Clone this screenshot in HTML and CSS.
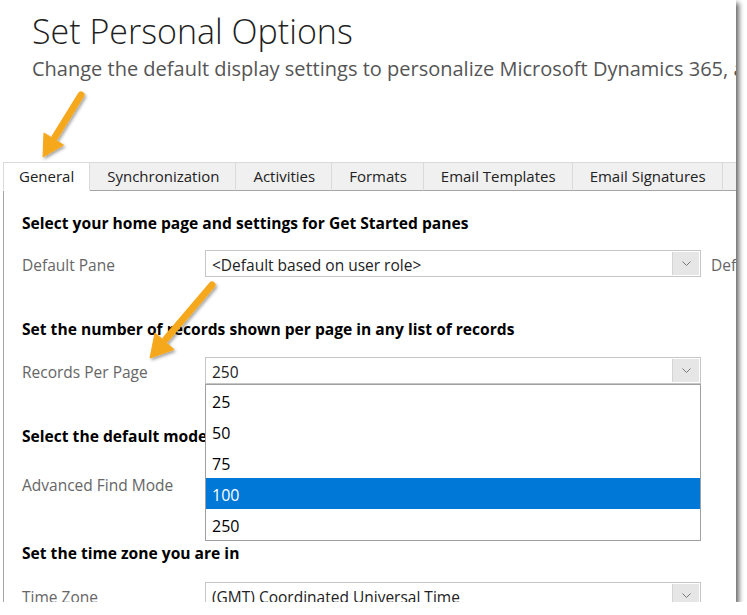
FILE: index.html
```html
<!DOCTYPE html>
<html lang="en">
<head>
<meta charset="utf-8">
<title>Set Personal Options</title>
<link rel="stylesheet" href="styles.css">
</head>
<body>
<div class="frame">
  <header class="header">
    <h1 class="title">Set Personal Options</h1>
    <p class="subtitle">Change the default display settings to personalize Microsoft Dynamics 365, and choose options for each area</p>
  </header>

  <nav class="tabs">
    <div class="tab tab-active">General</div>
    <div class="tab">Synchronization</div>
    <div class="tab">Activities</div>
    <div class="tab">Formats</div>
    <div class="tab">Email Templates</div>
    <div class="tab">Email Signatures</div>
    <div class="tab">Privacy</div>
  </nav>

  <main class="panel">
    <section class="section s1">
      <h2 class="heading">Select your home page and settings for Get Started panes</h2>
      <div class="row">
        <span class="label">Default Pane</span>
        <div class="select"><span class="value">&lt;Default based on user role&gt;</span><span class="btn"><svg width="9" height="5" viewBox="0 0 9 5"><path d="M0.5 0.5 L4.5 4.5 L8.5 0.5" fill="none" stroke="#777" stroke-width="1"/></svg></span></div>
        <span class="after">Default Tab</span>
      </div>
    </section>

    <section class="section s2">
      <h2 class="heading">Set the number of records shown per page in any list of records</h2>
      <div class="row">
        <span class="label">Records Per Page</span>
        <div class="select"><span class="value">250</span><span class="btn"><svg width="9" height="5" viewBox="0 0 9 5"><path d="M0.5 0.5 L4.5 4.5 L8.5 0.5" fill="none" stroke="#777" stroke-width="1"/></svg></span>
          <ul class="list">
            <li class="opt">25</li>
            <li class="opt">50</li>
            <li class="opt">75</li>
            <li class="opt opt-sel">100</li>
            <li class="opt">250</li>
          </ul>
        </div>
      </div>
    </section>

    <section class="section s3">
      <h2 class="heading">Select the default mode in Advanced Find</h2>
      <div class="row">
        <span class="label">Advanced Find Mode</span>
        <div class="select"><span class="btn"></span></div>
      </div>
    </section>

    <section class="section s4">
      <h2 class="heading">Set the time zone you are in</h2>
      <div class="row">
        <span class="label">Time Zone</span>
        <div class="select"><span class="value">(GMT) Coordinated Universal Time</span><span class="btn"><svg width="9" height="5" viewBox="0 0 9 5"><path d="M0.5 0.5 L4.5 4.5 L8.5 0.5" fill="none" stroke="#777" stroke-width="1"/></svg></span></div>
      </div>
    </section>
  </main>

  <svg class="arrows" width="736" height="602" viewBox="0 0 736 602">
    <defs>
      <filter id="sh" x="-50%" y="-50%" width="200%" height="200%">
        <feDropShadow dx="1.5" dy="2" stdDeviation="1.5" flood-color="#000" flood-opacity="0.35"/>
      </filter>
    </defs>
    <g filter="url(#sh)" fill="#f5a81c" stroke="#f5a81c">
      <line x1="81" y1="95" x2="55" y2="137" stroke-width="7" stroke-linecap="round"/>
      <polygon points="43,157 63.5,145 44,133" stroke-width="1" stroke-linejoin="round"/>
      <line x1="212" y1="285" x2="166" y2="339" stroke-width="7" stroke-linecap="round"/>
      <polygon points="150,358 174,349.5 155,333" stroke-width="1" stroke-linejoin="round"/>
    </g>
  </svg>
</div>
</body>
</html>
```

FILE: styles.css
```css
* { box-sizing: border-box; }
html, body { margin: 0; padding: 0; background: #fff; }
body { font-family: "Open Sans", "Noto Sans", sans-serif; }

.frame {
  position: relative;
  width: 736px;
  height: 602px;
  overflow: hidden;
  background: #fff;
  box-shadow: 3px 3px 5px rgba(0, 0, 0, 0.6);
}

.header { padding: 9px 0 0 32px; white-space: nowrap; }
.title {
  margin: 0;
  font-weight: 300;
  font-size: 34px;
  line-height: 45px;
  color: #1f1f1f;
}
.subtitle {
  margin: 2px 0 0;
  font-size: 20px;
  line-height: 26px;
  color: #555;
}

.tabs {
  display: flex;
  margin-top: 80px;
  padding-left: 3px;
  height: 29px;
  white-space: nowrap;
}
.tab {
  flex: none;
  height: 29px;
  padding: 0 16px 0 17px;
  border-top: 1px solid #dadada;
  border-right: 1px solid #dadada;
  border-bottom: 1px solid #a5a5a5;
  background: #f0f0f0;
  font-size: 15px;
  line-height: 27px;
  color: #222;
}
.tab-active {
  background: #fff;
  border-left: 1px solid #dadada;
  border-bottom-color: #fff;
  padding: 0 15px;
}

.panel {
  border-left: 1px solid #a5a5a5;
  margin-left: 3px;
  height: 420px;
  padding: 22px 0 0 18px;
  color: #000;
}
.heading {
  margin: 0;
  font-size: 15.6px;
  font-weight: 700;
  line-height: 20px;
  white-space: nowrap;
}
.s2 { margin-top: 42px; }
.s3 { margin-top: 42px; }
.s4 { margin-top: 46px; }
.s1 .row { margin-top: 17px; }
.s2 .row { margin-top: 18px; }
.s3 .row { margin-top: 24px; }
.s4 .row { margin-top: 19px; }

.row {
  display: flex;
  align-items: center;
  height: 27px;
}
.label {
  flex: none;
  width: 183px;
  padding-top: 2px;
  font-size: 15.5px;
  color: #666;
}
.select {
  position: relative;
  flex: none;
  display: flex;
  justify-content: flex-end;
  width: 496px;
  height: 27px;
  border: 1px solid #c6c6c6;
  background: #fff;
}
.value {
  flex: 1;
  padding: 1px 0 0 6px;
  font-size: 15.5px;
  line-height: 26px;
  color: #222;
  white-space: nowrap;
  overflow: hidden;
}
.btn {
  flex: none;
  width: 27px;
  margin: 1px 1px 1px 0;
  background: #e6e6e6;
  border-left: 1px solid #d4d4d4;
  display: flex;
  align-items: center;
  justify-content: center;
}
.after {
  margin-left: 10px;
  padding-top: 2px;
  font-size: 15.5px;
  color: #666;
  white-space: nowrap;
}

.list {
  position: absolute;
  left: -1px;
  top: 26px;
  width: 496px;
  margin: 0;
  padding: 0;
  list-style: none;
  border: 1px solid #a0a0a0;
  background: #fff;
  z-index: 2;
}
.opt {
  height: 31px;
  padding: 3px 0 0 6px;
  font-size: 16px;
  line-height: 28px;
  color: #000;
}
.opt-sel { background: #0078d7; color: #fff; }

.arrows {
  position: absolute;
  left: 0;
  top: 0;
  pointer-events: none;
  z-index: 5;
}
```
